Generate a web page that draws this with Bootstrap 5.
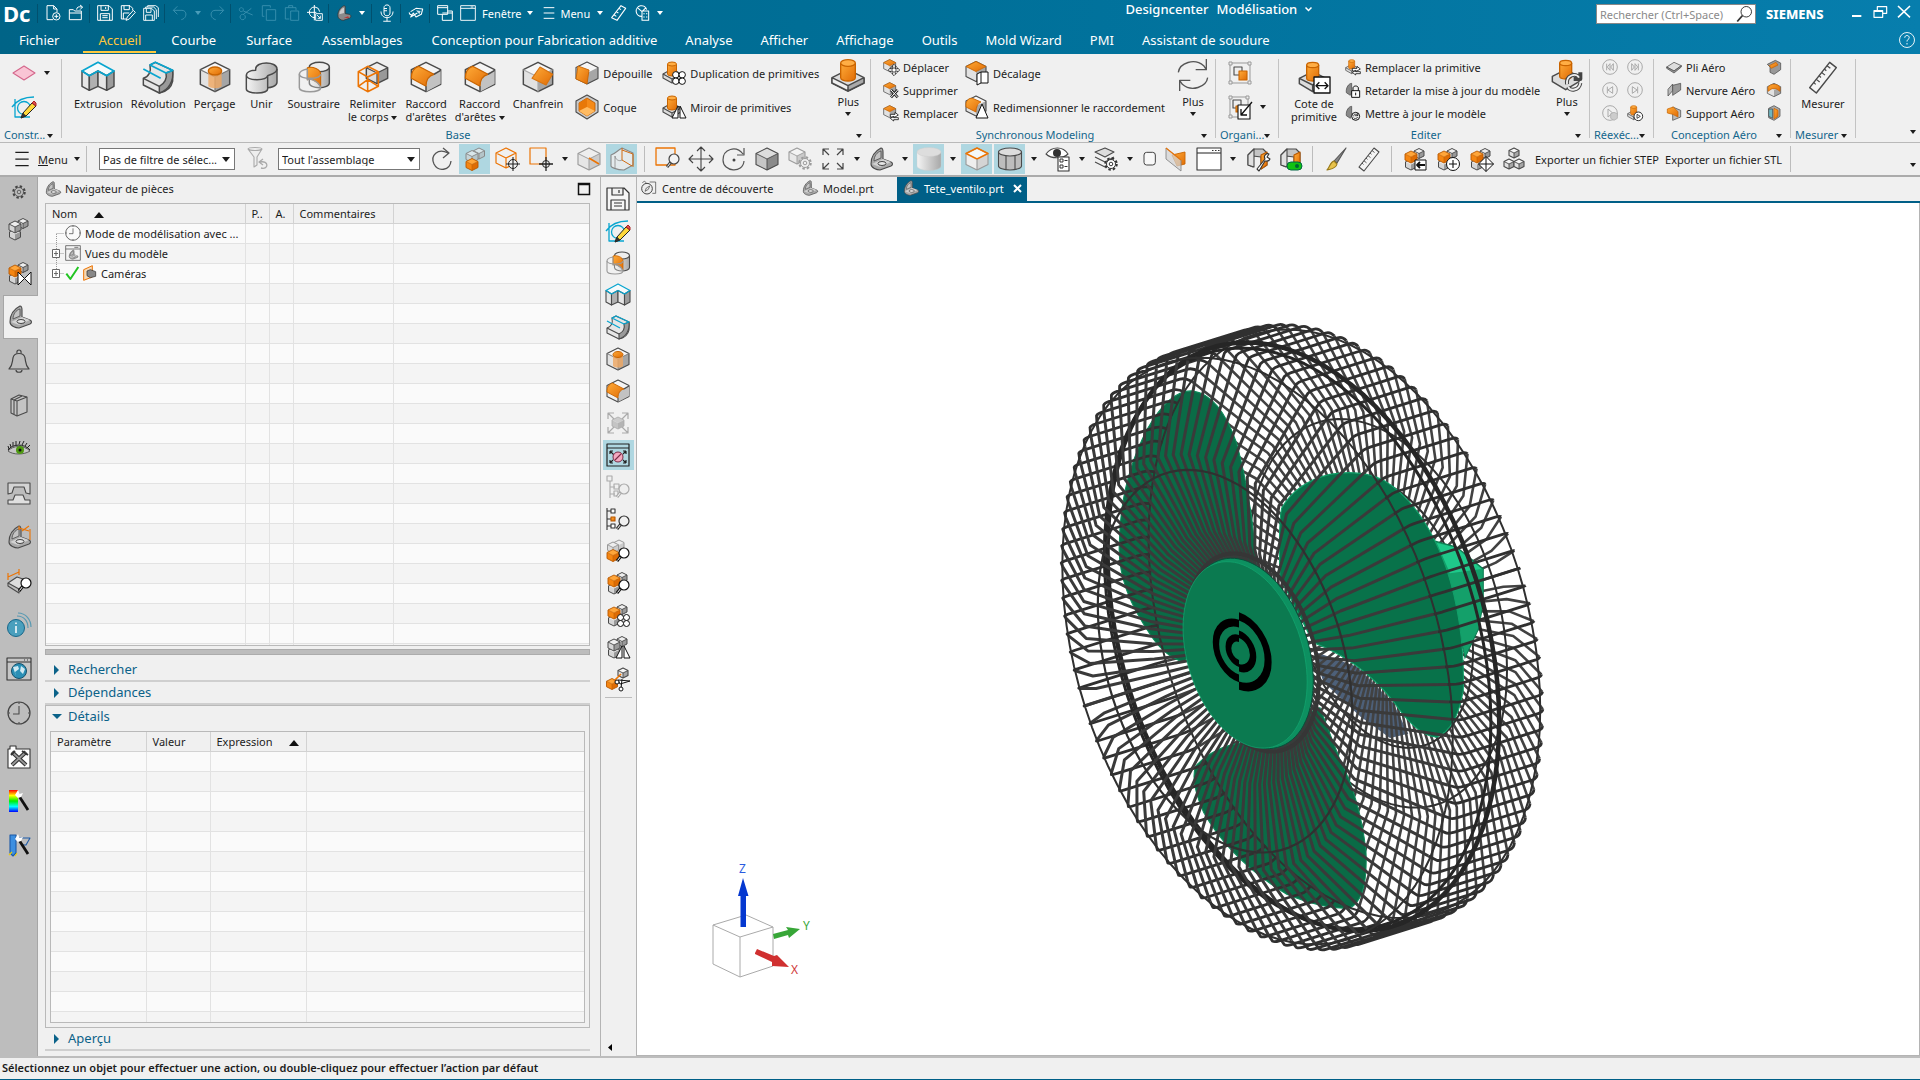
<!DOCTYPE html>
<html lang="fr">
<head>
<meta charset="utf-8">
<meta name="viewport" content="width=device-width, initial-scale=1">
<title>Designcenter - Modélisation</title>
<link href="https://cdn.jsdelivr.net/npm/bootstrap@5.3.0/dist/css/bootstrap.min.css" rel="stylesheet">
<style>
:root{--ui:#f0f0f0;--brand:#005f87;--hl:#afd7e1;--line:#b4b4b4}
body{font-family:"Noto Sans","Open Sans",sans-serif;font-size:11px;line-height:13px;color:#1c1c1c;background:var(--ui);overflow:hidden}
button{background:none;border:0;padding:0;color:inherit;font:inherit;line-height:13px}
svg{display:block;flex:none;overflow:visible}
.s16{width:16px;height:16px}.s18{width:18px;height:18px}.s20{width:20px;height:20px}.s24{width:24px;height:24px}.s32{width:32px;height:32px}
.tri{display:inline-block;width:0;height:0;border:3px solid transparent;border-top:4px solid currentColor;border-bottom:0;flex:none}
.topbar{background:linear-gradient(90deg,#006487,#007099 50%,#077ead);color:#fff}
.title-row{height:27px}
.dc-logo{font-size:22px;font-weight:700;line-height:27px;width:35px;padding-left:3px;flex:none;white-space:nowrap}
.qa{width:23px;height:26px}
.qa.dim{color:#4a9dba;opacity:.75}
.qa-sep{width:1px;height:19px;margin:0 3px 0 2px;background:#01506e}
.qa-tri{width:14px;height:26px}
.qa-txt{height:26px;gap:6px}
.qa-txt.near{gap:3px}
.grow-a{flex:462 1 0}.grow-b{flex:286 1 0}
.app-title{font-weight:500;font-size:13px;height:19px}
.searchbox{width:160px;height:20px;border:1px solid #888;background:#fff}
.searchbox input{border:0;outline:0;width:138px;font-size:11px;padding:0 3px;color:#333}
.searchbox input::placeholder{color:#8a8a8a;opacity:1}
.maker{font-weight:800;font-size:13px;width:88px;padding-left:10px}
.win-btn{width:24px;height:24px}
.tabs-row{height:27px}
.tabs-row a{color:#fff;text-decoration:none;font-size:13px;line-height:22px;padding:2px 14px 0;height:26px}
.tabs-row a:nth-child(-n+5){padding:2px 15px 0}
.tabs-row a:first-child{margin-right:9px}
.tabs-row a.on{color:#ffc83c;border-bottom:2px solid #ffc83c}
.ribbon{height:89px;border-bottom:1px solid #b9b9b9;padding-top:5px}
.rgroup{position:relative;height:79px;border-right:1px solid #c3c3c3}
.rbody{height:69px}
.rlabel{height:13px;color:#12668c}
.launch{position:absolute;right:8px;bottom:0}
.big{min-width:44px;padding:2px 4px 0;height:66px;justify-content:flex-start}
.big svg{margin-bottom:4px}
.big .tri{margin:0 0 1px 3px}
.plus{width:38px;height:66px;margin-left:3px}
.plus svg{margin-bottom:4px}
.plus .tri{margin:4px 0 0}
.medcol{padding-top:2px;gap:10px}
.med{height:24px;gap:4px}
.smlcol{gap:7px}
.sml{height:16px;gap:4px}
.g1{width:62px}.g2{width:809px}.g3{width:345px}.g4{width:63px}.g5{width:311px}.g6{width:64px}.g7{width:137px}.g8{width:65px}
.cmdbar{height:34px;border-bottom:2px solid #ababab;gap:2px}
.tb{width:31px;height:30px;display:flex;align-items:center;justify-content:center;flex:none}
.tb.on{background:var(--hl)}
.ta{width:13px;height:30px;display:flex;align-items:center;justify-content:center;flex:none}
.tsep{width:1px;height:26px;background:#bcbcbc;margin:0 6px}
.tsep.tight{margin:0 5px}
.pick{position:relative;height:22px}
.pick select{appearance:none;width:100%;height:22px;border:1px solid #777;border-radius:0;background:#fff;font-size:11px;padding:0 3px;color:#1c1c1c}
.pick .tri{position:absolute;right:5px;top:9px;border-width:4px;border-top-width:5px;border-bottom:0}
.rail{width:38px;background:#bdbdbd;border-right:1px solid #a6a6a6}
.rail button{height:44px;width:37px;display:flex;align-items:center;justify-content:center;color:#444}
.rail button:first-child{height:30px}
.rail button.on{background:var(--ui);width:35px;margin:0 0 0 3px;border:1px solid #a6a6a6;border-right:0;padding-right:2px}
.navpane{width:563px;padding:0 10px 5px 7px;border-right:1px solid #b4b4b4}
.navhead{height:26px;padding-bottom:3px}
.boxed{border:1px solid #b9b9b9;overflow:hidden}
.tree-box{flex:447 1 0;min-height:0}
.splitter{height:6px;background:#bdbdbd;border:1px solid #acacac;margin:3px 0 4px}
.sect{height:23px;border-bottom:2px solid #cfcfcf;color:#0b6289;font-size:13px;padding-left:9px;text-align:left;width:100%}
.sect .mark-r{width:0;height:0;border:5px solid transparent;border-left-color:#0b6289;border-right:0;margin-right:9px}
.sect .mark-d{width:0;height:0;border:5px solid transparent;border-top-color:#0b6289;border-bottom:0;margin:0 6px 0 -3px}
.sect.open-sect{border:0;padding-left:5px;height:21px}
.detail-box{flex:321 1 0;min-height:0}
.gridtbl{table-layout:fixed;width:100%;border-collapse:collapse}
.gridtbl th{height:19px;font-weight:400;background:#f0f0f0;border-right:1px solid #d2d2d2;border-bottom:1px solid #d2d2d2;padding:0 6px;white-space:nowrap}
.gridtbl td{height:20px;background:#fafafa;border-right:1px solid #e2e2e2;border-bottom:1px solid #e2e2e2;padding:0 0 0 6px;white-space:nowrap;overflow:hidden}
.gridtbl tr:nth-child(even) td{background:#f4f4f4}
.gridtbl th:last-child,.gridtbl td:last-child{border-right:0}
.twig{width:13px;height:19px}
.up{display:inline-block;border:5px solid transparent;border-bottom:6px solid #111;border-top:0;margin-left:14px}
.vbar{width:36px;padding:6px 1px 0 0;border-right:1px solid #b4b4b4}
.vbar .tb{height:30px;margin:1px 0}
.vrule{width:27px;height:1px;background:#bcbcbc;margin-top:2px}
.doc-tabs{height:26px;border-bottom:2px solid var(--brand)}
.doc-tabs a{color:#1c1c1c;text-decoration:none;font-size:11px;gap:5px;height:24px;padding-bottom:2px}
.doc-tabs a.on{background:var(--brand);color:#fff;padding:0 5px 2px 6px}
.canvas{background:#fff;border-right:1px solid #b4b4b4;border-bottom:1px solid #b4b4b4;position:relative;display:grid;place-items:center}
.model{margin:22px 0 0 44px;width:520px;height:680px}
.triad{position:absolute;left:53px;bottom:54px;width:160px;height:150px}
.statusbar{height:24px;border-top:2px solid #bdbdbd;border-bottom:1px solid var(--brand);font-weight:600;padding:0 2px 3px}
</style>
<script src="https://cdn.jsdelivr.net/npm/bootstrap@5.3.0/dist/js/bootstrap.bundle.min.js"></script>
</head>
<body>
<div class="vh-100 d-flex flex-column">
<header class="topbar">
  <div class="title-row d-flex align-items-start">
    <span class="dc-logo">Dc</span><span class="qa-sep mt-1"></span>
    <button class="qa" data-i="wnew" data-s="s16"></button><button class="qa" data-i="wopen" data-s="s16"></button><span class="qa-sep mt-1"></span>
    <button class="qa" data-i="save" data-s="s16"></button><button class="qa" data-i="saveas" data-s="s16"></button><button class="qa" data-i="saveall" data-s="s16"></button><span class="qa-sep mt-1"></span>
    <button class="qa dim" data-i="undo" data-s="s16"></button><span class="qa-tri d-flex align-items-center justify-content-center" style="color:#4a9dba"><i class="tri"></i></span><button class="qa dim" data-i="redo" data-s="s16"></button><span class="qa-sep mt-1"></span>
    <button class="qa dim" data-i="cut" data-s="s16"></button><button class="qa dim" data-i="copy" data-s="s16"></button><button class="qa dim" data-i="paste" data-s="s16"></button><button class="qa" data-i="target" data-s="s16"></button><span class="qa-sep mt-1"></span>
    <button class="qa" data-i="partdark" data-s="s16"></button><span class="qa-tri d-flex align-items-center justify-content-center"><i class="tri"></i></span><span class="qa-sep mt-1"></span>
    <button class="qa" data-i="mic" data-s="s18"></button><span class="qa-sep mt-1"></span>
    <button class="qa" data-i="tag" data-s="s16"></button><span class="qa-sep mt-1"></span>
    <button class="qa" data-i="wins" data-s="s16"></button>
    <button class="qa-txt d-flex align-items-center ms-1" data-i="win" data-s="s16">Fenêtre <i class="tri"></i></button>
    <button class="qa-txt near d-flex align-items-center ms-2" data-i="burger" data-s="s16">Menu <i class="tri ms-1"></i></button>
    <button class="qa ms-1" data-i="ruler" data-s="s16"></button><button class="qa" data-i="globe" data-s="s16"></button>
    <span class="qa-tri d-flex align-items-center justify-content-center"><i class="tri"></i></span>
    <span class="grow-a"></span>
    <button class="app-title d-flex align-items-center gap-2"><span>Designcenter</span><span>Modélisation</span><svg width="7" height="5" viewBox="0 0 7 5"><path d="M.5 .5L3.500 3.500L6.500 .5" fill="none" stroke="#fff" stroke-width="1.500"/></svg></button>
    <span class="grow-b"></span>
    <label class="searchbox d-flex align-items-center mt-1" data-end="mag"><input type="text" placeholder="Rechercher (Ctrl+Space)" aria-label="Rechercher"></label>
    <span class="maker pt-2">SIEMENS</span>
    <button class="win-btn" data-i="wmin" data-s="s16"></button><button class="win-btn" data-i="wrest" data-s="s16"></button><button class="win-btn" data-i="wclose" data-s="s16"></button>
    <span class="ps-1"></span>
  </div>
  <nav class="tabs-row d-flex align-items-start ps-1">
    <a href="#">Fichier</a><a href="#" class="on">Accueil</a><a href="#">Courbe</a><a href="#">Surface</a><a href="#">Assemblages</a><a href="#">Conception pour Fabrication additive</a><a href="#">Analyse</a><a href="#">Afficher</a><a href="#">Affichage</a><a href="#">Outils</a><a href="#">Mold Wizard</a><a href="#">PMI</a><a href="#">Assistant de soudure</a>
    <button class="ms-auto me-1 pt-1" data-i="help" data-s="s18"></button>
  </nav>
</header>

<section class="ribbon d-flex">
  <div class="rgroup g1">
    <div class="rbody d-flex flex-column ps-2 medcol">
      <button class="d-flex align-items-center gap-2 ms-1" data-i="plane" data-s="s24"><i class="tri"></i></button>
      <button class="ms-1" data-i="sketch" data-s="s24"></button>
    </div>
    <div class="rlabel ps-1">Constr...</div><i class="tri launch"></i>
  </div>
  <div class="rgroup g2">
    <div class="rbody d-flex ps-2">
      <button class="big d-flex flex-column align-items-center" data-i="extrude" data-s="s32">Extrusion</button>
      <button class="big d-flex flex-column align-items-center" data-i="revolve" data-s="s32">Révolution</button>
      <button class="big d-flex flex-column align-items-center" data-i="hole" data-s="s32">Perçage</button>
      <button class="big d-flex flex-column align-items-center" data-i="unite" data-s="s32">Unir</button>
      <button class="big d-flex flex-column align-items-center" data-i="subtract" data-s="s32">Soustraire</button>
      <button class="big d-flex flex-column align-items-center" data-i="trim" data-s="s32"><span>Relimiter<br>le corps<i class="tri"></i></span></button>
      <button class="big d-flex flex-column align-items-center" data-i="blend" data-s="s32"><span>Raccord<br>d'arêtes</span></button>
      <button class="big d-flex flex-column align-items-center" data-i="blend" data-s="s32"><span>Raccord<br>d'arêtes<i class="tri"></i></span></button>
      <button class="big d-flex flex-column align-items-center" data-i="chamfer" data-s="s32">Chanfrein</button>
      <div class="d-flex flex-column medcol ms-2" style="width:87px">
        <button class="med d-flex align-items-center" data-i="draft" data-s="s24">Dépouille</button>
        <button class="med d-flex align-items-center" data-i="shell" data-s="s24">Coque</button>
      </div>
      <div class="d-flex flex-column medcol" style="width:164px">
        <button class="med d-flex align-items-center" data-i="pattern" data-s="s24">Duplication de primitives</button>
        <button class="med d-flex align-items-center" data-i="mirror" data-s="s24">Miroir de primitives</button>
      </div>
      <button class="plus d-flex flex-column align-items-center" data-i="boss" data-s="s32">Plus<i class="tri"></i></button>
    </div>
    <div class="rlabel text-center pe-3">Base</div><i class="tri launch"></i>
  </div>
  <div class="rgroup g3">
    <div class="rbody d-flex ps-2">
      <div class="d-flex flex-column smlcol ms-1" style="width:82px">
        <button class="sml d-flex align-items-center" data-i="syncmove" data-s="s16">Déplacer</button>
        <button class="sml d-flex align-items-center" data-i="syncdel" data-s="s16">Supprimer</button>
        <button class="sml d-flex align-items-center" data-i="syncrep" data-s="s16">Remplacer</button>
      </div>
      <div class="d-flex flex-column medcol" style="width:206px">
        <button class="med d-flex align-items-center" data-i="offset" data-s="s24">Décalage</button>
        <button class="med d-flex align-items-center" data-i="resize" data-s="s24">Redimensionner le raccordement</button>
      </div>
      <button class="plus d-flex flex-column align-items-center" data-i="cycle" data-s="s32">Plus<i class="tri"></i></button>
    </div>
    <div class="rlabel text-center pe-3">Synchronous Modeling</div><i class="tri launch"></i>
  </div>
  <div class="rgroup g4">
    <div class="rbody d-flex flex-column medcol ps-2">
      <button class="ms-1 d-flex" data-i="group" data-s="s24"></button>
      <button class="ms-1 d-flex align-items-center gap-2" data-i="groupedit" data-s="s24"><i class="tri"></i></button>
    </div>
    <div class="rlabel ps-1">Organi...</div><i class="tri launch"></i>
  </div>
  <div class="rgroup g5">
    <div class="rbody d-flex ps-1">
      <button class="big d-flex flex-column align-items-center ms-1 me-1" data-i="dim" data-s="s32"><span>Cote de<br>primitive</span></button>
      <div class="d-flex flex-column smlcol" style="width:200px">
        <button class="sml d-flex align-items-center" data-i="bossrep" data-s="s16">Remplacer la primitive</button>
        <button class="sml d-flex align-items-center" data-i="lockpart" data-s="s16">Retarder la mise à jour du modèle</button>
        <button class="sml d-flex align-items-center" data-i="updpart" data-s="s16">Mettre à jour le modèle</button>
      </div>
      <button class="plus d-flex flex-column align-items-center" data-i="bosscycle" data-s="s32">Plus<i class="tri"></i></button>
    </div>
    <div class="rlabel text-center pe-3">Editer</div><i class="tri launch"></i>
  </div>
  <div class="rgroup g6">
    <div class="rbody d-grid" style="grid-template-columns:25px 25px;grid-auto-rows:16px;row-gap:7px;padding-left:12px">
      <button data-i="first" data-s="s16"></button><button data-i="last" data-s="s16"></button>
      <button data-i="prev" data-s="s16"></button><button data-i="next" data-s="s16"></button>
      <button data-i="playbox" data-s="s16"></button><button data-i="bossplay" data-s="s16"></button>
    </div>
    <div class="rlabel ps-1">Réexéc...</div><i class="tri launch"></i>
  </div>
  <div class="rgroup g7">
    <div class="rbody d-flex ps-2">
      <div class="d-flex flex-column smlcol ms-1" style="width:100px">
        <button class="sml d-flex align-items-center" data-i="flat" data-s="s16">Pli Aéro</button>
        <button class="sml d-flex align-items-center" data-i="rib" data-s="s16">Nervure Aéro</button>
        <button class="sml d-flex align-items-center" data-i="shelf" data-s="s16">Support Aéro</button>
      </div>
      <div class="d-flex flex-column smlcol">
        <button data-i="aero1" data-s="s16"></button><button data-i="aero2" data-s="s16"></button><button data-i="aero3" data-s="s16"></button>
      </div>
    </div>
    <div class="rlabel text-center pe-3">Conception Aéro</div><i class="tri launch"></i>
  </div>
  <div class="rgroup g8">
    <div class="rbody d-flex justify-content-center">
      <button class="big d-flex flex-column align-items-center" data-i="measure" data-s="s32">Mesurer</button>
    </div>
    <div class="rlabel ps-1">Mesurer</div><i class="tri launch"></i>
  </div>
  <i class="tri ms-auto me-1 align-self-end mb-2"></i>
</section>

<section class="cmdbar d-flex align-items-center" id="cmdbar">
  <button class="d-flex align-items-center ms-2 ps-1" data-i="burger" data-s="s20" style="width:70px;gap:6px"><span><u>M</u>enu</span><i class="tri"></i></button>
  <span class="tsep"></span>
  <span class="pick ms-1" style="width:136px"><select aria-label="Filtre"><option>Pas de filtre de sélec...</option></select><i class="tri"></i></span>
  <button class="tb ms-1" data-i="filter"></button>
  <span class="pick ms-1" style="width:142px"><select aria-label="Portée"><option>Tout l'assemblage</option></select><i class="tri"></i></span>
  <button class="tb ms-1" data-i="refresh"></button><button class="tb on" data-i="comp"></button><button class="tb" data-i="cubetgt"></button><button class="tb" data-i="recttgt"></button><span class="ta"><i class="tri"></i></span>
  <button class="tb" data-i="cubept"></button><button class="tb on" data-i="cubehl"></button><span class="tsep tight"></span>
  <button class="tb" data-i="zoomrect"></button><button class="tb" data-i="move"></button><button class="tb" data-i="rotate"></button><button class="tb" data-i="cubedark"></button><button class="tb" data-i="cubegear"></button><button class="tb" data-i="fit"></button><span class="ta"><i class="tri"></i></span>
  <button class="tb" data-i="part"></button><span class="ta"><i class="tri"></i></span>
  <button class="tb on" data-i="cylsoft"></button><span class="ta"><i class="tri"></i></span>
  <button class="tb on" data-i="cubetop"></button><button class="tb on" data-i="cylhard"></button><span class="ta"><i class="tri"></i></span>
  <button class="tb" data-i="eye"></button><span class="ta"><i class="tri"></i></span>
  <button class="tb" data-i="layers"></button><span class="ta"><i class="tri"></i></span>
  <button data-i="rrect" data-s="s16" class="ms-1"></button>
  <button class="tb" data-i="clip"></button><button class="tb" data-i="bigwin"></button><span class="ta"><i class="tri"></i></span>
  <button class="tb" data-i="secwrench"></button><button class="tb" data-i="sectoggle"></button><span class="tsep tight"></span>
  <button class="tb" data-i="brush"></button><button class="tb" data-i="measure"></button><span class="tsep tight"></span>
  <button class="tb" data-i="asmimport"></button><button class="tb" data-i="asmadd"></button><button class="tb" data-i="asmmove"></button><button class="tb" data-i="cubes3"></button>
  <button class="ms-1 text-nowrap">Exporter un fichier STEP</button><button class="ms-1 text-nowrap">Exporter un fichier STL</button><span class="tsep"></span>
  <i class="tri ms-auto me-1 align-self-end mb-2"></i>
</section>

<main class="d-flex flex-grow-1" style="min-height:0">
  <aside class="rail" id="rail"></aside>
  <section class="navpane d-flex flex-column">
    <div class="navhead d-flex align-items-center gap-1" data-i="part" data-s="s16"><span class="flex-grow-1">Navigateur de pièces</span><svg width="12" height="12"><path d="M.5 .5H11.500V11.500H.5ZM0 1.500H12" fill="none" stroke="#111" stroke-width="1.500"/></svg></div>
    <div class="boxed tree-box">
      <table class="gridtbl" data-rows="23">
        <colgroup><col style="width:199px"><col style="width:24px"><col style="width:24px"><col style="width:100px"><col></colgroup>
        <thead><tr><th>Nom <i class="up"></i></th><th>P..</th><th>A.</th><th>Commentaires</th><th></th></tr></thead>
        <tbody>
          <tr><td><div class="d-flex align-items-center"><svg class="twig"><path d="M4.500 10V20M4.500 9.500H12" stroke="#999" stroke-dasharray="1 1" fill="none"/></svg><span data-i="clock" data-s="s16"></span><span class="ms-1">Mode de modélisation avec ...</span></div></td><td></td><td></td><td></td><td></td></tr>
          <tr><td><div class="d-flex align-items-center"><svg class="twig"><path d="M4.500 0V20M4.500 9.500H12" stroke="#999" stroke-dasharray="1 1"/><path d="M.5 5.500H7.500V13.500H.5ZM2 9.500H6M4 7V12" fill="#fff" stroke="#666"/></svg><span data-i="viewwin" data-s="s16"></span><span class="ms-1">Vues du modèle</span></div></td><td></td><td></td><td></td><td></td></tr>
          <tr><td><div class="d-flex align-items-center"><svg class="twig"><path d="M4.500 0V10M4.500 9.500H12" stroke="#999" stroke-dasharray="1 1"/><path d="M.5 5.500H7.500V13.500H.5ZM2 9.500H6M4 7V12" fill="#fff" stroke="#666"/></svg><span data-i="check" data-s="s16"></span><span data-i="camera" data-s="s16"></span><span class="ms-1">Caméras</span></div></td><td></td><td></td><td></td><td></td></tr>
        </tbody>
      </table>
    </div>
    <div class="splitter"></div>
    <button class="sect d-flex align-items-center"><i class="mark-r"></i>Rechercher</button>
    <button class="sect d-flex align-items-center"><i class="mark-r"></i>Dépendances</button>
    <div class="boxed detail-box d-flex flex-column px-1 pb-1">
      <button class="sect open-sect d-flex align-items-center flex-shrink-0"><i class="mark-d"></i>Détails</button>
      <div class="boxed bg-white p-0 mt-1 flex-grow-1">
        <table class="gridtbl" data-rows="14">
          <colgroup><col style="width:95px"><col style="width:64px"><col style="width:96px"><col></colgroup>
          <thead><tr><th>Paramètre</th><th>Valeur</th><th>Expression <i class="up"></i></th><th></th></tr></thead>
          <tbody></tbody>
        </table>
      </div>
    </div>
    <button class="sect d-flex align-items-center"><i class="mark-r"></i>Aperçu</button>
  </section>
  <aside class="vbar d-flex flex-column align-items-center" id="vbar"></aside>
  <section class="flex-grow-1 d-flex flex-column">
    <nav class="doc-tabs d-flex align-items-start">
      <a href="#" class="d-flex align-items-center ps-1" style="width:165px" data-i="discover" data-s="s16">Centre de découverte</a>
      <a href="#" class="d-flex align-items-center" style="width:95px" data-i="part" data-s="s16">Model.prt</a>
      <a href="#" class="on d-flex align-items-center" data-i="part" data-s="s16">Tete_ventilo.prt<svg class="ms-1" width="9" height="9" viewBox="0 0 9 9"><path d="M1 1L8 8M8 1L1 8" stroke="#fff" stroke-width="2"/></svg></a>
    </nav>
    <div class="canvas flex-grow-1">
      <svg class="model" id="fan" viewBox="0 0 520 680"></svg>
      <svg class="triad" viewBox="0 0 160 150" font-size="12">
        <g fill="#fff" stroke="#aaa"><path d="M23 74L56 64L83 76V115L50 126L23 113Z"/><path d="M23 74L50 86L83 76M50 86V126" fill="none"/></g>
        <path d="M50.500 76V45H48L53 27L58.500 45H56V76Z" fill="#0538d0"/>
        <path d="M83 83L98 79L96 76L110 78L99 87L98 84L84 88Z" fill="#37a637"/>
        <path d="M65 102L67 98L84 105L87 104L99 116L82 115L82 111L65 103Z" fill="#d03030"/>
        <text x="49" y="22" fill="#2a5be0">Z</text><text x="113" y="79" fill="#3aa83a">Y</text><text x="101" y="123" fill="#d03a3a">X</text>
      </svg>
    </div>
  </section>
</main>
<footer class="statusbar d-flex align-items-center">Sélectionnez un objet pour effectuer une action, ou double-cliquez pour effectuer l’action par défaut</footer>
</div>

<svg width="0" height="0" class="position-absolute"><defs>
<linearGradient id="go" x1="0" y1="0" x2="1" y2="1"><stop offset="0" stop-color="#ffab38"/><stop offset="1" stop-color="#e06c06"/></linearGradient>
<linearGradient id="gg" x1="0" y1="0" x2="1" y2="0"><stop offset="0" stop-color="#f4f4f4"/><stop offset="1" stop-color="#a8a8a8"/></linearGradient>
<linearGradient id="gr" x1="0" y1="0" x2="0" y2="1"><stop offset="0" stop-color="#f00"/><stop offset=".25" stop-color="#ff0"/><stop offset=".5" stop-color="#0e0"/><stop offset=".75" stop-color="#0ff"/><stop offset="1" stop-color="#00f"/></linearGradient>
</defs></svg>
<script>
/* ---- icon drawing helpers, all on a 24 x 24 grid ---- */
const K='#4a4a4a',O='url(#go)',G='url(#gg)',C='#08a5cf',OR='#ec7404';
const P=(d,f='none',s=K,w=1.1)=>`<path d="${d}" fill="${f}" stroke="${s}" stroke-width="${w}" stroke-linejoin="round"/>`;
const cube=(x,y,s,t='#f6f6f6',l='#e2e2e2',r='#a6a6a6',k=K,w=1.1)=>{const a=s,h=s/2;
 return P(`M${x} ${y-s}L${x+a} ${y-h}L${x} ${y}L${x-a} ${y-h}Z`,t,'none')+P(`M${x-a} ${y-h}L${x} ${y}V${y+s}L${x-a} ${y+h}Z`,l,'none')+P(`M${x+a} ${y-h}L${x} ${y}V${y+s}L${x+a} ${y+h}Z`,r,'none')+P(`M${x} ${y-s}L${x+a} ${y-h}V${y+h}L${x} ${y+s}L${x-a} ${y+h}V${y-h}Z`,'none',k,w)};
const edges=(x,y,s,k=K,w=.9)=>P(`M${x-s} ${y-s/2}L${x} ${y}L${x+s} ${y-s/2}M${x} ${y}V${y+s}`,'none',k,w);
const ocube=(x,y,s)=>cube(x,y,s,'#ffa63a','#f58612','#de6c04','#b85800',.9)+edges(x,y,s,'#c96400',.7);
const cyl=(x,y,a,b,h,f=G,t='#f6f6f6',k=K,w=1.1)=>P(`M${x-a} ${y}V${y+h}A${a} ${b} 0 0 0 ${x+a} ${y+h}V${y}`,f,k,w)+`<ellipse cx="${x}" cy="${y}" rx="${a}" ry="${b}" fill="${t}" stroke="${k}" stroke-width="${w}"/>`;
const magAt=(x,y,k='#111',f='#fff')=>P(`M${x-3} ${y+3}L${x-7} ${y+8}`,'none',k,3)+P(`M${x-3} ${y+3}L${x-6.500} ${y+7.500}`,'none','#fff',1)+`<circle cx="${x}" cy="${y}" r="5" fill="${f}" stroke="${k}" stroke-width="1.200"/>`;
const four=(x,y,r=3)=>[[-r,-r],[r,-r],[-r,r],[r,r]].map(p=>`<circle cx="${x+p[0]}" cy="${y+p[1]}" r="${r}" fill="#fff" stroke="#111"/>`).join('');
const mir=(x,y)=>P(`M${x-1} ${y-12}V${y}H${x-7}ZM${x+1} ${y-12}V${y}H${x+7}Z`,'#fff','#111',1);
const cross4=(x,y,r,f='#fff')=>P(`M${x} ${y-r}L${x+r} ${y}L${x} ${y+r}L${x-r} ${y}Z`,f,'#111',1)+P(`M${x-r} ${y}H${x+r}M${x} ${y-r}V${y+r}`,'none','#111',1);
const gearAt=(x,y,r,k=K,f='#f0f0f0')=>`<circle cx="${x}" cy="${y}" r="${r*.95}" fill="none" stroke="${k}" stroke-width="${r*.35}" stroke-dasharray="${r*.4} ${r*.346}"/><circle cx="${x}" cy="${y}" r="${r*.75}" fill="${f}" stroke="${k}"/><circle cx="${x}" cy="${y}" r="${r*.3}" fill="none" stroke="${k}"/>`;
const boss=P('M0 14L12 8L24 14V18L12 24L0 18Z','#dcdcdc')+P('M0 14L12 20V24L0 18Z','#f0f0f0','none')+P('M24 14L12 20V24L24 18Z','#aaa','none')+P('M0 14L12 20L24 14M12 20V24M0 14V18L12 24L24 18V14','none')+cyl(12,3,5.500,2.500,11,O,'#ffae45','#c96400',1);
const bossS=P('M1 13L10 8L19 13V17L10 22L1 17Z','#dcdcdc')+P('M1 13L10 18L19 13M10 18V22','none')+cyl(10,3,4.500,2,10,O,'#ffae45','#c96400',1);
const part=P('M2 17C2 10 6 4 12 1C14 1 14 3 14 5V12L22 15C24 16 24 18 22 19L11 23C8 23 2 21 2 17Z','#a9a9a9')+P('M3 17L14 12L22 15L11 20Z','#d2d2d2','none')+P('M5 14C5 9 8 5 12 4V11Z','#c4c4c4',K,.8)+`<ellipse cx="13" cy="16.500" rx="4" ry="2" fill="#e6e6e6" stroke="#444"/>`;
const asm=cube(16,6.500,5,'#eee','#ddd','#999',K,1)+edges(16,6.500,5)+cube(8,17.500,5.500,'#eee','#d5d5d5','#999',K,1)+ocube(8,10,6);
const asmg=cube(16,6.500,5,'#eee','#ddd','#999',K,1)+edges(16,6.500,5)+cube(8,17.500,5.500,'#eee','#d5d5d5','#999',K,1)+cube(8,10,6,'#eee','#d5d5d5','#999',K,1)+edges(8,10,6);
const arrows4=(k)=>P('M2 8V2H8M2 2L8 8M22 8V2H16M22 2L16 8M2 16V22H8M2 22L8 16M22 16V22H16M22 22L16 16','none',k,1.200);
const circ=(p,k='#aaa')=>`<circle cx="12" cy="12" r="11" fill="none" stroke="${k}" stroke-width="1.500"/>`+P(p,'none',k,1.500);
const W='currentColor';
const sect=P('M3 8L9 2H18L22 6V18L16 22V10L8 9L8 20L3 18Z','#c4c4c4')+P('M16 8L22 5V18L16 22Z',O,'#b85800')+P('M3 8L9 2L9 20L3 18Z','#e0e0e0');
const sky=P('M3 4V22H18M0 12C5 5 13 2 22 2','none',C,1.300)+`<circle cx="12" cy="13" r="6.500" fill="none" stroke="${C}" stroke-width="1.300"/>`+P('M9 23L11 18L20 8L24 11L14 21Z','#ffd83a','#222',1)+P('M20 8L22 6L24 8V11Z','#e05050','#a22',1)+P('M9 23L11 18L14 21Z','#333','#222',.5);
const I={
extrude:P('M0 7.500L12 1L24 7.500L18.500 11L12 7.500L5.500 11Z','#f6fbfc','none')+P('M0 7.500L5.500 11V22L0 19Z','#e6e6e6')+P('M5.500 11L12 7.500V19L5.500 22Z','#b0b0b0')+P('M12 7.500L18.500 11V22L12 19Z','#e6e6e6')+P('M18.500 11L24 7.500V19L18.500 22Z','#9c9c9c')+P('M0 7.500L12 1L24 7.500L18.500 11L12 7.500L5.500 11Z','none',C,1.300),
revolve:P('M6 3L10 1L23 7V15C22 20 18 23 13 24L1 18V13C5 12 7 8 6 3Z','#e6e6e6')+P('M18 9L23 7C24 15 20 22 13 24V19C17 17 19 13 18 9Z','#9a9a9a')+P('M1 13L13 19','none')+P('M6 3L10 1L23 7L18 9ZM1 6L14 13','none',C,1.300),
hole:cube(12,12,11)+edges(12,12,11,'#777')+P('M7 8V19C9 21 15 21 17 19V8Z','#f0a861cc','none')+'<ellipse cx="12" cy="7.500" rx="5" ry="3" fill="url(#go)" stroke="#c96400"/>',
unite:P('M8 6C8 0 24 0 24 6V16C24 19 19 20 17 20V21C17 25 1 25 1 21V11C1 8 5 7 8 7Z',G)+P('M1 11C2 15 16 15 17 11C20 10 24 9 24 6M17 11V20','none'),
subtract:cyl(16,4.500,7.500,3.500,12,G,'#eee')+P('M7 5C11 4 17 6 17 10V19C13 14 9 13 7 14Z',O,'#c96400',.8)+P('M1 10V20C1 24 17 24 17 20C15 14 8 13 7 14V6','#f4f4f455','#999')+P('M1 10C1 7 7 6 7 6M17 10C17 14 1 14 1 10','none','#999'),
trim:cube(15,9,8,'#eee','#ddd','#999')+edges(15,9,8)+P('M1 8L8 4L16 8V19L8 23L1 19ZM1 8L8 12L16 8M8 12V23M1 19L8 14L16 19','none',OR,1.200),
blend:cube(12,12,11,'#f4f4f4','#f0f0f0','#b4b4b4')+P('M12 12L18 10L23 7V17L12 23Z','#c2c2c2','none')+P('M6.500 4L18 10C14 11 12 14 12 19L1 13C1 8 3 5 6.500 4Z',O,'#c96400',.9)+P('M12 19V23M18 10L23 7','none'),
chamfer:cube(12,12,11)+edges(12,12,11,'#aaa')+P('M13.500 4.500L23 10L18 18L7.500 13Z',O,'#d87410',.8),
draft:cube(12,12,11)+P('M3 5L14 9L12 23L1 18Z',O,'#c96400',.9),
shell:P('M12 0L23 6V17L12 24L1 17V6Z','#c9c9c9')+P('M4 8L12 3L20 8V16L12 21L4 16Z','#f58a18','#b85800',.8)+P('M12 3L4 8V16L12 12Z','#e87808','none')+P('M4 16L12 12L20 16L12 21Z','#ffbb62','none'),
pattern:bossS+four(17,17,3.200), mirror:bossS+mir(17,23), boss,
syncmove:cube(10,10,9)+P('M10 1L19 5.500L10 10L1 5.500Z',O,'#c96400')+P('M16.500 8L20 11.500H18V15H21.500V13L25 16.500L21.500 20V18H18V21.500H20L16.500 25L13 21.500H15V18H11.500V20L8 16.500L11.500 13V15H15V11.500H13Z','#fff','#111',1.200),
syncdel:cube(10,10,9)+P('M10 1L19 5.500L10 10L1 5.500Z',O,'#c96400')+P('M12 12L22 23M22 12L12 23','none','#222',4)+P('M12 12L22 23M22 12L12 23','none','#fff',1.500),
syncrep:cube(10,10,9)+P('M10 1L19 5.500L10 10L1 5.500Z',O,'#c96400')+P('M11 14H18V11L23 15L18 18H11ZM23 19H16V17L11 20L16 24V22H23Z','#fff','#111',1.200),
offset:cube(11,10.500,10)+P('M11 .5L21 5.500L11 10.500L1 5.500Z',O,'#c96400',.9)+P('M12 13L16 11V22L12 24ZM16 11H23V22H16','#fff','#111',1),
resize:cube(11,11,10)+P('M1 8C3 3 6 3 8 3.500L16 7C13 8 11 12 11 17L1 12Z',O,'#c96400',.9)+P('M17 9L23 23H11Z','#fff','#111',1),
cycle:P('M1 10C2 3 13 -1 20 5L22 8M22 0V8H14M23 14C22 21 11 25 4 19L2 16M2 24V16H10','none','#555',1),
group:P('M2 2H22V22H2Z','none','#999',1)+P('M1 1H4V4H1ZM20 1H23V4H20ZM1 20H4V23H1ZM20 20H23V23H20Z','#eee','#999',1)+P('M6 6H14V14H6Z','#eee')+P('M11 10H19V19H11Z',O,'#c96400'),
groupedit:P('M2 2H20V22H2Z','none','#999',1)+P('M1 1H4V4H1ZM18 1H21V4H18ZM1 20H4V23H1Z','#eee','#999',1)+P('M5 5H13V13H5Z','#eee')+P('M8 11H13V17H8Z',O,'#c96400')+P('M10 10H22V24H10Z','#fff','#111')+P('M24 7L13 20M13 14V20H19','none','#111',1.300),
dim:P('M1 13L11 8L21 13V17L11 23L1 17Z','#dcdcdc')+P('M1 13L11 18L21 13M11 18V23','none')+cyl(11,3,4.500,2,10,O,'#ffae45','#c96400',1)+P('M12 12H24V24H12Z','#fff','#111',1)+P('M13.500 18.500H22.500M16 16L13.500 18.500L16 21M20 16L22.500 18.500L20 21','none','#111',1),
bossrep:bossS+P('M11 14H18V11L23 15L18 18H11ZM23 19H16V17L11 20L16 24V22H23Z','#fff','#111',1.200),
lockpart:P('M2 16C1 8 6 2 10 2V16L8 20Z','#888')+P('M10 13H22V23H10Z','#fff','#111',1.500)+P('M12 13V9C12 5 20 5 20 9V13M16 16V20','none','#111',1.500),
updpart:P('M2 16C1 8 6 2 10 2V16L8 20Z','#888')+`<circle cx="16" cy="17" r="6" fill="#eee" stroke="#111" stroke-width="1.500"/>`+P('M13 17C13 13 18 13 19 16M19 12V16H15M19 18C18 21 14 21 13 19','none','#111'),
bosscycle:P('M1 13L11 8L21 13V17L11 23L1 17Z','#dcdcdc')+cyl(11,3,4.500,2,10,O,'#ffae45','#c96400',1)+P('M12 19C11 12 19 10 21 14M22 10V15H17M22 18C21 24 14 24 13 21','none','#444',3)+P('M12 19C11 12 19 10 21 14M22 18C21 24 14 24 13 21','none','#eee',1.400),
first:circ('M7 7V17M12 7V17L8 12ZM17 7V17L13 12Z'),last:circ('M17 7V17M12 7V17L16 12ZM7 7V17L11 12Z'),
prev:circ('M8 7V17M16 7V17L9 12Z'),next:circ('M16 7V17M8 7V17L15 12Z'),
playbox:circ('M9 6V18L16 12Z')+P('M13 13L18 11L23 13V20L18 23L13 20Z','#ccc','#aaa'),
bossplay:bossS+`<circle cx="17" cy="17" r="6.500" fill="#fff" stroke="#111" stroke-width="1.300"/>`+P('M15 14V20L20 17Z','none','#111'),
flat:P('M1 12L12 5L23 10L12 18Z','#ddd')+P('M1 12L12 18L23 10V12L12 21L1 14Z','#999'),
rib:P('M3 11L10 3V13L3 21Z','#bbb')+P('M10 5L22 2V12L10 20Z','#999'),
shelf:P('M10 3L22 8V18L10 23Z','#bbb')+P('M2 6L11 3L18 10V18L10 14L2 12Z',O,'#c96400'),
aero1:P('M2 8L14 2L22 6V16L12 23L6 20V12Z','#999')+P('M5 10L15 5L18 9L8 14Z',O,'#c96400'),
aero2:cube(12,12,10,'#ccc')+P('M3 8C6 2 18 2 21 8V14L15 10L9 10L3 14Z',O,'#c96400'),
aero3:P('M4 5L12 1L21 6V17L12 23L4 19Z','#aaa')+P('M10 6V20L4 17V6Z','#6fb6c0')+P('M12 5L18 8V17L12 21Z',O,'#c96400'),
measure:P('M2 20L17 1L22 5L7 24Z','#f4f4f4')+P('M15 3.500L17.500 5.500M13 6L14.500 7.300M11 8.600L13.500 10.600M9 11L10.500 12.400M7 13.800L9.500 15.800M5 16L6.500 17.500','none',K,.9),
plane:P('M1 12L12 5L23 12L12 19Z','#f9c5d5','#d4668b',1.100), sketch:sky,
burger:P('M4 4H20M4 12H20M4 20H20','none',W,1.500),
filter:P('M3 2C3 0 17 0 17 2L12 10V18L9 20V10ZM3 2C5 4 15 4 17 2','#eee','#aaa')+P('M16 21C24 23 24 13 15 15M18 12L14 15L18 18','none','#aaa',1.300),
refresh:P('M18 6C8 1 0 8 4 17C8 25 20 24 21 14M13 1L19 6L13 11','none','#555',1.300),
comp:cube(16,6.500,5.500,'#d8e6ea','#c6d4d8','#b5c5c9','#888',1)+edges(16,6.500,5.500,'#888')+cube(9,9.500,6,'#d8e6ea','#c6d4d8','#b5c5c9','#888',1)+edges(9,9.500,6,'#888')+ocube(9,17.500,6),
cubetgt:P('M10 1L20 6V16L10 21L0 16V6ZM0 6L10 11L20 6M10 11V21','none',OR,1.200)+`<circle cx="17" cy="17" r="4.500" fill="#f0f0f0" stroke="#222"/>`+P('M17 10V24M10 17H24','none','#222'),
recttgt:P('M1 1H17V17H1Z','none',OR,1.200)+`<circle cx="17" cy="17" r="3.500" fill="#f0f0f0" stroke="#222"/>`+P('M17 10V24M10 17H24','none','#222',1.300),
cubept:cube(12,12,11,'#eee','#e6e6e6','#ccc','#999')+edges(12,12,11,'#999')+P('M12 11L22 17','none',OR,1.600),
cubehl:P('M1 8C5 7 8 3 12 1L23 6V18L14 23C6 23 1 20 1 19Z','#e4eaec','#888')+P('M12 1V13L22 19M12 3L23 7V20','none','#d06a10',1)+P('M12 13C9 15 5 12 5 9V21','none','#888',.8),
zoomrect:P('M0 1H19V18H0Z','none',OR,1.300)+magAt(18,12,'#444','#f3f3f3'),
move:P('M12 0V24M0 12H24M8 4L12 0L16 4M8 20L12 24L16 20M4 8L0 12L4 16M20 8L24 12L20 16','none','#444',1.100),
rotate:P('M21 7C14 -2 1 2 1 13C1 25 21 27 22 14M22 1V8H15','none','#555',1.200)+'<circle cx="12" cy="13" r="1.500" fill="#444"/>',
cubedark:cube(12,12,11,'#ddd','#c6c6c6','#8a8a8a')+edges(12,12,11),
cubegear:'<g opacity=".5">'+cube(9,9,8)+edges(9,9,8)+gearAt(17,16,6)+'</g>',
fit:arrows4('#444'), fitdim:arrows4('#aaa')+cube(12,12,6,'#ccc','#c4c4c4','#b4b4b4','#aaa',.8), part,
partdark:`<g>${P('M3 17C2 10 6 4 12 1C14 1 14 3 14 5V13L20 14C23 15 23 19 20 20L11 23C7 23 3 20 3 17Z','#8a8a8a','#333')}${P('M5 14C5 9 8 5 12 4V12Z','#ccc','none')}${P('M11 20L18 17L20 19Z','#b33','none')}</g>`,
cylsoft:cyl(12,5,12,4.500,14,G,'#ddd','#c9c9c9',.4), cylhard:cyl(12,5,11.500,4,14,'#bdbdbd','#ddd')+P('M8 9V22M17 9V22','none'),
cubetop:cube(12,12,11,'#f4f8f9','#eee','#d4d4d4','#999')+P('M12 1L23 6.500L12 12L1 6.500Z','none',OR,1.500)+P('M12 12V23','none','#999'),
eye:P('M0 7C6 -1 17 -1 22 7C17 12 5 12 0 7Z','#fff')+'<circle cx="11" cy="6" r="4" fill="#333"/>'+P('M12 10H23V24H12Z','#fff','#333')+P('M14 12H17V15H14ZM14 18H17V21H14ZM18.500 13.500H21.500M18.500 19.500H21.500','none','#333',1),
layers:P('M1 5L11 1L20 5L11 10Z','#ddd')+P('M1 10L11 15L20 10M1 15L11 20L20 15','none')+gearAt(17,17,6,'#333','#fff'),
rrect:'<rect x="3" y="2" width="17" height="19" rx="4" fill="#f8f8f8" stroke="#444" stroke-width="1.500"/>',
clip:P('M8 8L21 5V17L13 19Z',O,'#c96400',.9)+P('M2 1L17 13V24L2 12Z','#d4d4d4bb','#888',.9)+P('M2 1L17 13','none',OR,1.100),
bigwin:P('M0 1H24V23H0Z','#fff','#333')+P('M0 6H24','none','#333')+P('M15 3.500H16.500M18 3.500H19.500M21 3.500H22.500','none','#333'),
secwrench:sect+P('M12 22L20 12C18 8 22 6 24 7L22 10L25 12C24 15 21 14 20 14L14 24Z','#fff','#333'),
sectoggle:sect+'<rect x="9" y="15" width="15" height="8" rx="4" fill="#12c312" stroke="#064"/><circle cx="19" cy="19" r="2" fill="#063"/>',
brush:P('M22 1L10 14L13 16Z','#888','#555')+P('M10 14L13 17C12 22 6 22 3 23C6 20 6 15 10 14Z','#e8c34c','#997a1a'),
asmimport:asm+P('M12 13H23V23H12Z','#fff','#111',1)+P('M22 18H14M17 15L14 18L17 21','none','#111',1.800),
asmadd:asm+'<circle cx="17" cy="17" r="6.500" fill="#fff" stroke="#111"/>'+P('M17 13V21M13 17H21','none','#111'),
asmmove:asm+cross4(17,17,7.500), cubes3:cube(12,6,5)+edges(12,6,5)+cube(7,17,5)+edges(7,17,5)+cube(17,17,5)+edges(17,17,5),
gear:gearAt(12,12,8,'#444','none'), asmcons:asm+P('M11 11L17.500 17.500L11 24ZM24 11L17.500 17.500L24 24Z','#fff','#111',1), asmg,
bell:P('M2 20C6 16 5 13 6 9C7 3 17 3 18 9C19 13 18 16 22 20ZM10 4C9 0 15 0 14 4M9 21C9 24 15 24 15 21','none','#444',1.200),
books:P('M4 6L12 2L20 4V19L10 23L4 20Z','#c4c4c4')+P('M4 6L10 8V23M10 8L20 4M7 7L15 3M7 7V21','none'),
eyec:P('M1 14C6 8 17 8 23 14C17 18 6 18 1 14Z','#c6c6c6','#444',.8)+'<circle cx="13" cy="13" r="4" fill="#4f9a12"/><circle cx="13" cy="13" r="1.500" fill="#111"/>'+P('M1 13C5 7 17 6 23 13M2 12L1 9M4 10L3 7M6 9L6 5M9 8L9 4M12 7.500L13 4M15 8L17 4M18 9L20 6M20 11L23 8','none','#222',1),
jig:P('M1 2H23V13L19 12L17 6H7L5 12L1 13Z','#d4d4d4')+P('M1 23V19H6L8 14H16L18 19H23V23Z','#e0e0e0'),
partdim:part+P('M12 3L22 6M12 1V5M15 6L22 1M23 4V15','none',OR,1.100),
slabmag:P('M1 14L10 8L22 12L12 20Z','#ddd')+P('M1 14V17L12 24V20','none')+magAt(19,14)+P('M1 8L12 3M1 4V11M12 0V6','none',OR,1.200),
info:'<circle cx="9" cy="15" r="8.500" fill="#4a9fbd" stroke="#15668a"/>'+P('M9 13V20M9 9.500V11','none','#fff',1.500)+P('M10 3C17 3 21 8 21 15M11 0C19 0 24 7 24 14','none','#5a9ab2',1.200),
web:P('M0 1H24V23H0Z','#c6c6c6','#333')+P('M0 5H24M17 3H18M20 3H21','none','#333')+'<circle cx="12" cy="14" r="7.500" fill="#2a8fb5" stroke="#14506b"/>'+P('M6 10L11 9L12 12L8 15L9 19ZM14 9L18 12L16 17L13 14Z','#cfe9f2','none'),
clock:'<circle cx="12" cy="12" r="11" fill="none" stroke="#444" stroke-width="1.200"/>'+P('M12 5V13H6M12 1V3M12 21V23M1 12H3M21 12H23','none'),
tools:P('M1 4H3V1H9V4H23V23H1Z','#fff','#333')+P('M5 7L19 20M19 7L5 20','none','#333',4)+P('M5 7L19 20M19 7L5 20','none','#999',1.800)+P('M4 10L8 6M15 6L21 10','none','#333',2),
rainbow:'<rect x="2" y="1" width="9" height="22" fill="url(#gr)"/>'+P('M12 7L21 21','none','#111',2.800)+P('M11 1L12.500 5L16 4L14 8L11 9L8 6Z','#fff','none'),
drill:P('M3 2H9V20L6 23L3 20Z','#3d8fe0','#1c5aa8')+P('M12 5H23L19 12H14','none','#1c5aa8')+P('M12 7L21 21','none','#111',2.800)+P('M11 1L12.500 5L16 4L14 8L11 9L8 6Z','#fff','none')+P('M2 22L5 19M8 23L10 20','none','#ec0'),
floppy:P('M1 1H18L23 6V23H1ZM6 1V8H17V1M13 3V6M5 23V13H19V23M8 16H16M8 19H16','#f6f6f6','#333',1.200),
nofit:P('M1 1H23V23H1ZM1 5H23','none','#222',1.200)+P('M4 8H7M4 8V11M4 8L8 12M20 8H17M20 8V11M20 8L17 11M4 20H7M4 20V17M4 20L7 17M20 20H17M20 20V17M20 20L17 17','none','#222',1.200)+'<circle cx="12" cy="14" r="5" fill="#f4a8bf" stroke="#7a2a45"/>'+P('M9 17L15 11','none','#7a2a45'),
treedim:P('M1 1H6V6H1ZM4 6V23M4 12H9M4 19H9M8 9H13V14H8ZM8 16H12V21H8Z','none','#aaa')+magAt(18,14,'#aaa','#eee'),
tree:P('M1 1V23M1 4H5M1 12H5M1 19H5M5 2H9V6H5ZM5 17H9V21H5Z','#fff','#333')+P('M5 10H9V14H5Z',O,'#b85800')+magAt(18,14,'#333','#f0f0f0'),
asmmag1:cube(13,6,5,'#eee','#ddd','#ccc','#999',1)+cube(7,8.500,5.500,'#eee','#ddd','#ccc','#999',1)+edges(7,8.500,5.500,'#999')+ocube(7,16.500,6)+magAt(18,14), asmmag2:asm+magAt(18,14),
asmpat:asm+four(17.500,17.500,3), asmmir:asmg+mir(17,23), asmcut:cube(17,6,5)+edges(17,6,5)+ocube(6,17,5.500)+P('M8 14L15 7','none',OR,1.600)+P('M12 13L24 14L14 17ZM16 12L15 22','#fff','#111',1)+'<circle cx="11" cy="15" r="2" fill="#fff" stroke="#111"/><circle cx="15" cy="22" r="2" fill="#fff" stroke="#111"/>',
discover:P('M13 3H22V20H17M2 4L5 2L8 4','none')+'<circle cx="9" cy="13" r="8" fill="#eee" stroke="#444" stroke-width="1.500"/>'+P('M6 17L8 12L13 9L11 14Z','none'),
viewwin:P('M1 1H23V23H1ZM1 6H23M14 3.500H20','#f4f4f4')+'<g transform="translate(5 7) scale(.62)">'+part+'</g>',
check:P('M2 13L8 21L20 3','none','#22c522',3), camera:P('M4 7L17 1V18L4 23Z','#f6d9b5',OR,1.500)+P('M9 9L14 7L22 10V17L14 19L9 16Z','#888','#333'),
mag:'<circle cx="15" cy="9" r="7" fill="none" stroke="#333" stroke-width="1.300"/>'+P('M10 14L3 22','none','#333',2.500),
/* title-bar glyphs follow the text colour */
wnew:P('M12 22H3V1H13L18 6V11M13 1V6H18','none',W,1.500)+'<circle cx="17" cy="17" r="5.500" fill="none" stroke="currentColor" stroke-width="1.500"/>'+P('M17 14V20M14 17H20','none',W,1.500),
wopen:P('M2 22V7H8L10 9H20V22ZM2 12H20M13 7C13 3 16 2 21 3M18 0L22 3L18 7','none',W,1.500),
save:P('M1 1H18L23 6V23H1ZM6 1V8H17V1M13 3V6M5 23V13H19V23M8 16H16M8 19H16','none',W,1.500),
saveas:P('M9 21H2V1H15L19 5V8M6 1V7H14V1M5 21V12H14','none',W,1.500)+P('M9 23L11 18L20 8L23 11L14 21Z','none',W,1.500),
saveall:P('M1 5H13L17 9V23H1ZM5 5V11H12V5M4 23V15H14V23M4 5V3H16L20 7V21M7 3V1H19L23 4V18','none',W,1.400),
undo:P('M8 2L2 8L8 14M2 8H15C23 8 23 20 14 22','none',W,1.500), redo:P('M16 2L22 8L16 14M22 8H9C1 8 1 20 10 22','none',W,1.500),
cut:P('M8 14L20 5M8 9L22 15M5 4A3 3 0 1 0 5.100 4M7 14A4 4 0 1 0 7.100 14','none',W,1.400), copy:P('M8 7H22V23H8ZM5 17H2V1H14V4','none',W,1.400), paste:P('M8 21H2V4H18V8M7 4V1H13V4M10 9H22V23H10Z','none',W,1.400),
target:P('M11 0V23M0 11H14M11 3A8 8 0 1 0 12 19M12 3A8 8 0 0 1 19 10','none',W,1.500)+P('M13 13H23V23H13ZM15 15L20 20M20 16V20H16','none',W,1.400),
mic:P('M8 5C8 0 16 0 16 5V12C16 17 8 17 8 12ZM4 10C4 21 20 21 20 10M12 18V23M7 23H17M8 6H12M8 9H12','none',W,1.300),
tag:P('M4 10L12 5L22 6L20 14L12 18L8 12M2 11A3 3 0 1 0 8 12L4 18L14 12','none',W,1.600)+P('M12 8L19 9L17 14Z','#cfe5ee','none'),
wins:P('M1 1H16V14H1ZM1 4H16M16 9H23V23H8V14M8 12H23','none',W,1.500), win:P('M1 1H23V23H1ZM1 5H23M16 3H20','none',W,1.400),
ruler:P('M1 19L15 1L22 5L9 23ZM12 5L15 7M8 10L11 12M5 15L8 17','none',W,1.600),
globe:P('M12 17A8 8 0 1 1 19 7M5 4L12 10L18 4M12 9H22V23H12ZM14 13H16M18 13H20M14 18H16M18 18H20','none',W,1.600),
wmin:P('M6 18H20','none',W,3), wrest:P('M3 10H16V20H3ZM8 10V4H22V14H16M3 11H16','none',W,1.800), wclose:P('M3 3L21 20M21 3L3 20','none',W,2.400),
help:'<circle cx="12" cy="12" r="10" fill="none" stroke="currentColor" stroke-width="1.200"/>'+P('M9 9C9 5 15 5 15 9C15 11 12 11 12 14M12 16V18','none',W,1.300)
};
const svg=(n,s)=>`<svg class="${s}" viewBox="0 0 24 24" aria-hidden="true">${I[n]}</svg>`;
document.getElementById('rail').innerHTML=['gear','asmg','asmcons','part','bell','books','eyec','jig','partdim','slabmag','info','web','clock','tools','rainbow','drill'].map((n,i)=>`<button class="${i==3?'on':''}" data-i="${n}" data-s="${i?'s24':'s18'}"></button>`).join('');
document.getElementById('vbar').innerHTML=['floppy','sketch','subtract','extrude','revolve','hole','blend','fitdim','nofit','treedim','tree','asmmag1','asmmag2','asmpat','asmmir','asmcut'].map((n,i)=>`<button class="tb ${i==8?'on':''}" data-i="${n}"></button>`).join('')+'<span class="vrule"></span><svg class="mt-auto mb-1 me-3" width="4" height="8"><path d="M4 0V7L0 3.500Z"/></svg>';
document.querySelectorAll('[data-i]').forEach(e=>{e.insertAdjacentHTML('afterbegin',svg(e.dataset.i,e.dataset.s||'s24'));
 if(e.classList.contains('qa')||e.classList.contains('win-btn'))e.classList.add('d-flex','align-items-center','justify-content-center');
 if(e.tagName=='BUTTON'&&!e.textContent.trim())e.setAttribute('aria-label',e.dataset.i)});
document.querySelectorAll('[data-end]').forEach(e=>e.insertAdjacentHTML('beforeend',svg(e.dataset.end,'s18')));
document.querySelectorAll('table[data-rows]').forEach(t=>{const b=t.tBodies[0],n=t.rows[0].cells.length;
 while(b.rows.length<+t.dataset.rows)b.insertAdjacentHTML('beforeend','<tr>'+'<td></td>'.repeat(n)+'</tr>')});

/* ---- fan model: point at radius r, angle t, depth z along the axis ---- */
const pt=(r,t,z)=>{const a=r/99;return [208+a*64*Math.cos(t)+z*.954,354+a*(28*Math.cos(t)+92*Math.sin(t))-z*.299].map(v=>v.toFixed(1)).join(' ')};
const ring=(r,z,w,c='#303030')=>{let d='';for(let i=0;i<=90;i++)d+=(i?'L':'M')+pt(r,i*Math.PI/45,z);return P(d+'Z','none',c,w)};
const N=104;let back='',rim='',front='';
for(let i=0;i<N;i++){const t=i*2*Math.PI/N;
 back+=`M${pt(304,t,103)}L${pt(210,t,138)}L${pt(75,t,142)}`;
 rim+=`M${pt(300,t,9)}L${pt(308,t,13)}Q${pt(310,t,15)} ${pt(310,t,20)}L${pt(310,t,94)}Q${pt(310,t,99)} ${pt(304,t,103)}`;
 front+=`M${pt(96,t,-2)}L${pt(130,t,-14)}L${pt(214,t,-27)}L${pt(300,t,9)}`;}
/* outlines traced on a 3 : 2.3 grid */
const shape=(a,f,s)=>`<path transform="scale(.3333 .4337)" d="${a}" fill="${f}" stroke="${s}" stroke-width="3"/>`;
const logo=(r,w,side)=>`<path d="M0 ${-r}A${r} ${r} 0 0 ${side} 0 ${r}" fill="none" stroke="#000" stroke-width="${w}"/>`;
const disc=(r,z)=>'M'+Array.from({length:90},(_,i)=>pt(r,i*Math.PI/45,z)).join('L')+'Z';
document.getElementById('fan').innerHTML=
 shape('M820 810L950 845L1060 930L1105 1000L1050 1010L960 960L850 880Z','#4d6079','none')+
 P(back,'none','#424242',2.600)+ring(200,136,2)+ring(140,141,2)+
 shape('M1180 555L1250 570L1330 620L1330 700L1315 760L1275 825L1240 700Z','#14a06a','#0c7a50')+shape('M1190 560L1250 572L1325 620L1230 630Z','#1fc98a','none')+
 shape('M430 835Q370 820 330 770Q230 660 238 560Q240 420 320 300Q390 205 460 210Q540 220 590 330Q615 400 635 500L655 640Z','#0a6b46','#0c8a5a')+
 shape('M720 640Q715 520 725 480Q770 420 870 402Q960 390 1030 415Q1150 470 1220 620Q1275 750 1270 900Q1250 990 1190 1008Q1130 1005 1060 925Q960 830 820 790Z','#08724a','#13a06a')+
 shape('M610 1020Q520 1030 467 1075Q450 1110 490 1180Q570 1290 740 1370Q850 1405 930 1402Q985 1380 978 1270Q960 1150 900 1060L840 940Z','#0a6b46','#0c8a5a')+
 P(rim,'none','#303030',2.800)+ring(303,101,2)+ring(303,58,4.500,'#262626')+ring(299,52,3,'#262626')+
 P(front,'none','#3a3a3a',3)+ring(302,10,2)+ring(197,-24,2.200)+ring(102,5,4,'#363636')+
 P(disc(98,2),'#0d9060','#07503a',1)+P(disc(96,-3),'#0b7a50','#12a36d',.8)+
 `<g transform="matrix(64 22 0 76 199 351)">${logo(.36,.1,0)+logo(.165,.09,0)+logo(.455,.11,1)+logo(.22,.1,1)}</g>`;
</script>
</body>
</html>
